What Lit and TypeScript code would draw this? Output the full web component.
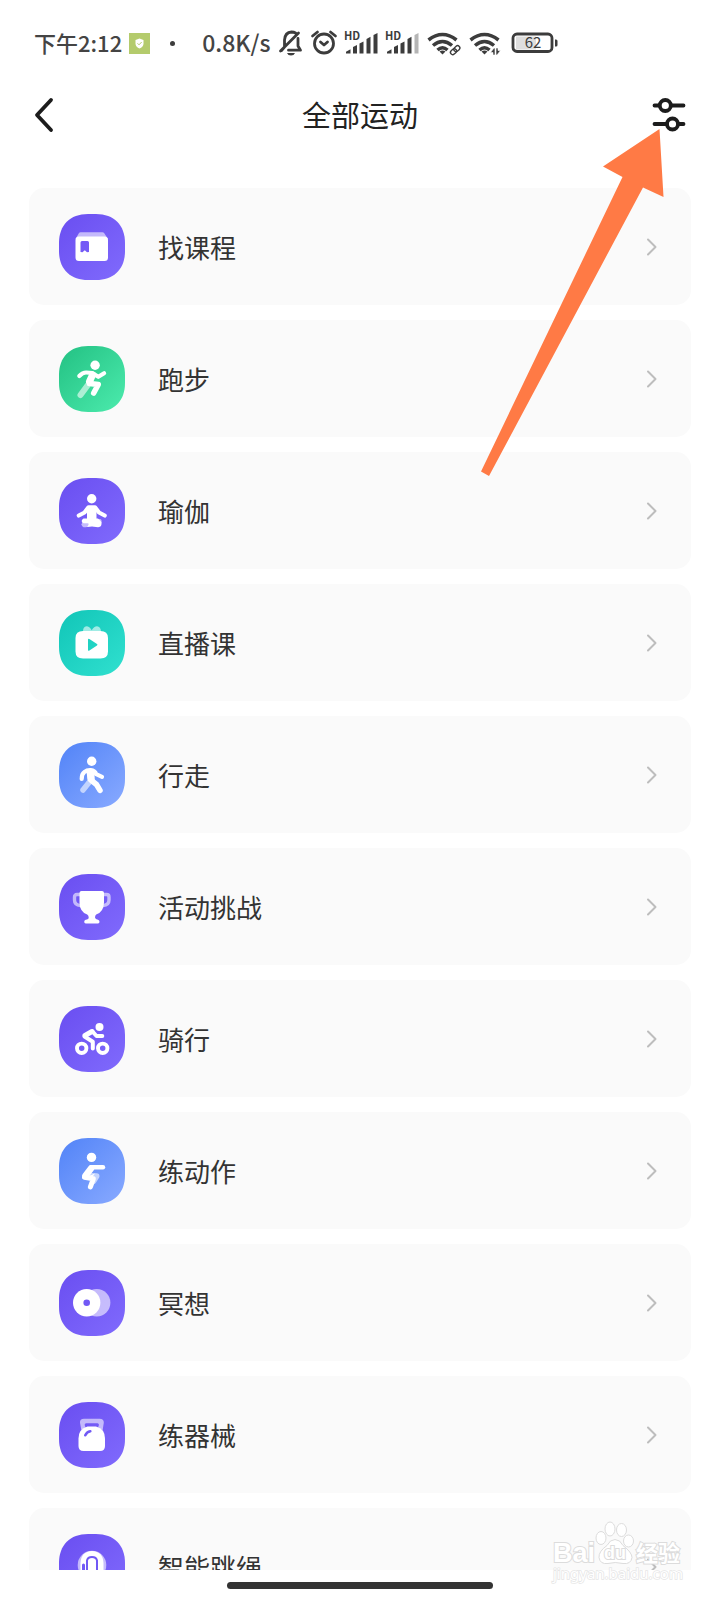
import { LitElement, html, svg, css, type SVGTemplateResult } from "lit";
import { customElement } from "lit/decorators.js";

type Tone = "purple" | "green" | "teal" | "blue";

interface Sport {
  name: string;
  tone: Tone;
  glyph: SVGTemplateResult;
}

const TONES: Record<Tone, [string, string]> = {
  purple: ["#6c51f2", "#7f69fc"],
  green: ["#27c587", "#4ae9ab"],
  teal: ["#14c8ba", "#2fdfce"],
  blue: ["#5787f8", "#86a8ff"],
};

const SPORTS: Sport[] = [
  {
    name: "找课程",
    tone: "purple",
    glyph: svg`
      <path class="faded" d="M21.5 18.3h22q1 0 1.600.8L49 25H16.500l3.500-5.900q.5-.8 1.500-.8Z"/>
      <path class="solid" fill-rule="evenodd" d="M20 22.500h25.500q3.500 0 3.500 3.500V43.500q0 3.500-3.500 3.500H20q-3.500 0-3.500-3.500V26q0-3.500 3.500-3.500ZM23 27q-1.500 0-1.500 1.500V38l2 .3 2.300-2 2.200 2 2-.3V28.500Q30 27 28.500 27Z"/>`,
  },
  {
    name: "跑步",
    tone: "green",
    glyph: svg`
      <path class="line faded" stroke-width="6" d="M28.500 39.500 21.500 49"/>
      <circle class="solid" cx="36.100" cy="19.200" r="4.700"/>
      <path class="line" stroke-width="4.200" d="M20.300 30q3.500-3.700 7-3.500l6 .5 6 3.800 5.800-3.500"/>
      <path class="line" stroke-width="7" d="M33.500 29 30.500 35.500"/>
      <path class="line" stroke-width="5.500" d="M30.500 37.500 39.300 38.500 34.700 47"/>`,
  },
  {
    name: "瑜伽",
    tone: "purple",
    glyph: svg`
      <circle class="solid" cx="32.700" cy="20.700" r="4.700"/>
      <path class="line" stroke-width="4.200" d="M19.800 37.500 25.500 34.500 29.500 29.300H36L40 34.500 45.700 37.500"/>
      <path class="solid" d="M28 29H37.500V42H28Z"/>
      <path class="faded" d="M24.500 41h16.500q1.500 0 1.500 1.500v2L27 49.200h-2.500q-2-.8-2-3Z"/>
      <path class="solid" d="M24.500 40.500H39l3.500 3.500q.7 5.300-3.500 5.200L33 48.500l-5 .5q3-3.500.5-3.700l-4 0q-3.700-2 0-4.800Z"/>`,
  },
  {
    name: "直播课",
    tone: "teal",
    glyph: svg`
      <path class="faded" d="M24 21.500q0-5 3.500-5.200 3 0 5.200 4 2.300-4 5.300-4 3.700.2 4 5.200Z"/>
      <path class="solid" fill-rule="evenodd" d="M24 21h17.500q7.500 0 7.500 7v13.500q0 7-7.500 7H24q-7.500 0-7.500-7V28q0-7 7.500-7Zm5 8.700v10.300q.2 1.300 1.400.6l7.600-5.100q1-.8 0-1.500l-7.600-5q-1.200-.6-1.400.7Z"/>`,
  },
  {
    name: "行走",
    tone: "blue",
    glyph: svg`
      <path class="line faded" stroke-width="5.500" d="M30 40.500 24 48"/>
      <circle class="solid" cx="32.700" cy="19.200" r="4.700"/>
      <path class="line" stroke-width="4.200" d="M22.700 37q0-5 2.500-6.800 3-2.300 6.500-2 4.300.5 5.500 4l5.800 2.600"/>
      <path class="line" stroke-width="7.500" d="M31.500 31 32 36.500"/>
      <path class="line" stroke-width="5.500" d="M32.500 38.500 37.500 42.500 41 48.300"/>`,
  },
  {
    name: "活动挑战",
    tone: "purple",
    glyph: svg`
      <path class="line faded" stroke-width="3.400" d="M21 20.500h-3q-2.500 0-2.500 2.500V26q0 5 6 5.500M44.500 20.500h3q2.500 0 2.500 2.500V26q0 5-6 5.500"/>
      <path class="solid" d="M22.500 17h20.500q2 0 2 2v9.500q-.3 9.500-7.800 12-1.200 1-1.200 3 .3 2 3 2.300 1.500.4 1.500 2t-1.500 1.700H26.700q-1.500-.2-1.500-1.700t1.500-2q3-.3 3-2.300t-1.500-3q-7.500-2.500-7.700-12V19q0-2 2-2Z"/>`,
  },
  {
    name: "骑行",
    tone: "purple",
    glyph: svg`
      <circle class="line" cx="22.700" cy="42.300" r="4.700" stroke-width="3.900"/>
      <circle class="line" cx="43.700" cy="42.300" r="4.700" stroke-width="3.900"/>
      <circle class="solid" cx="40.500" cy="20.900" r="4"/>
      <path class="line" stroke-width="5" d="M26 29.500 33 25.500"/>
      <path class="line" stroke-width="4" d="M33.500 25.500 37.500 30h5.800M25.500 30.500l8.300 5.300V42.500"/>`,
  },
  {
    name: "练动作",
    tone: "blue",
    glyph: svg`
      <path class="line faded" stroke-width="6" d="M33 38 37.500 38.200 34.500 43"/>
      <circle class="solid" cx="32.500" cy="19.400" r="4.700"/>
      <path class="line" stroke-width="4.400" d="M32.500 29.200H44"/>
      <path class="line" stroke-width="6.500" d="M32 30.500 26.500 37.800"/>
      <path class="line" stroke-width="5" d="M25.500 39.200 34.300 40.800 31.400 48.800"/>
      <path class="solid" d="m30 38 6-2.500-3 4Z"/>`,
  },
  {
    name: "冥想",
    tone: "purple",
    glyph: svg`
      <circle class="faded" cx="37.700" cy="32.800" r="13.700"/>
      <circle class="solid" cx="27.700" cy="32.800" r="13.700"/>
      <circle class="hole" cx="27.700" cy="32.800" r="3.300"/>`,
  },
  {
    name: "练器械",
    tone: "purple",
    glyph: svg`
      <path class="faded" fill-rule="evenodd" d="M25 16.700h15.500q4.500 0 4.300 4L43.500 29H22.500l-1.500-8.300q-.3-4 4-4Zm2 4.500q-1.800.6-1.200 2.200l.8 2.100h12.400l.8-2.100q.6-1.600-1.200-2.200Z"/>
      <path class="solid" d="M28.500 24.500h8.500q9 2.500 9 12v7.500q0 5-5 5H24.500q-5 0-5-5v-7.500q0-9.500 9-12Z"/>
      <path class="cut" stroke-width="2.600" d="M26.300 33.200q1.500-3.200 5-3.900"/>`,
  },
  {
    name: "智能跳绳",
    tone: "purple",
    glyph: svg`
      <circle class="faded" cx="33" cy="31" r="14.300"/>
      <path class="solid" d="M21.500 48V29q.5-11.500 11.500-12 11 .5 11.500 12v19Z"/>
      <path class="cut" stroke-width="2" d="M28 48V26.500q.7-3.500 5-3.500t5 3.500V48"/>
      <path class="cut" stroke-width="3" d="M24.500 48V31"/>`,
  },
];

@customElement("sport-row")
export class SportRow extends LitElement {
  static properties = { sport: { attribute: false } };
  declare sport: Sport;

  static styles = css`
    :host { display: block; }
    .card {
      display: flex;
      align-items: center;
      height: 117px;
      padding: 0 33px 0 30px;
      border-radius: 15px;
      background: #fafafa;
      color: #333;
      text-decoration: none;
    }
    .icon { flex: none; width: 66px; height: 66px; }
    .name { flex: 1; margin-left: 33px; font-size: 26px; line-height: 36px; }
    .chevron { flex: none; width: 12px; height: 20px; }
    .solid { fill: #fff; }
    .faded { fill: #fff; opacity: 0.58; }
    .line { fill: none; stroke: #fff; stroke-linecap: round; stroke-linejoin: round; }
    .cut { fill: none; stroke: #7159f5; stroke-linecap: round; }
    .hole { fill: #7159f5; }
  `;

  render() {
    const [from, to] = TONES[this.sport.tone];
    return html`<a class="card" href="#">
      <svg class="icon" viewBox="0 0 66 66" aria-hidden="true">
        <defs>
          <linearGradient id="tone" x1="0" y1="0" x2="1" y2="1">
            <stop offset="0.1" stop-color=${from}></stop>
            <stop offset="0.95" stop-color=${to}></stop>
          </linearGradient>
        </defs>
        <path d="M29 0H37C55 0 66 11 66 29V37C66 55 55 66 37 66H29C11 66 0 55 0 37V29C0 11 11 0 29 0Z" fill="url(#tone)"></path>
        ${this.sport.glyph}
      </svg>
      <span class="name">${this.sport.name}</span>
      <svg class="chevron" viewBox="0 0 12 20" aria-hidden="true">
        <path d="M2 2.500 9.500 10 2 17.500" fill="none" stroke="#bdbdbd" stroke-width="2" stroke-linecap="round" stroke-linejoin="round"></path>
      </svg>
    </a>`;
  }
}

@customElement("status-bar")
export class StatusBar extends LitElement {
  static styles = css`
    :host {
      display: flex;
      align-items: center;
      height: 86px;
      padding: 0 34px;
      box-sizing: border-box;
      color: #444;
      font-size: 22px;
      line-height: 30px;
      font-weight: 500;
      white-space: nowrap;
    }
    .time { padding-bottom: 2px; }
    .badge { width: 21px; height: 21px; margin: 0 20px 0 7px; }
    .dot { width: 5px; height: 5px; border-radius: 50%; background: #3c3c3c; }
    .speed { margin: 0 8px 0 27px; padding-bottom: 2px; font-size: 23px; }
    .icons { display: flex; align-items: center; gap: 8px; }
    .icons svg { display: block; height: 26px; overflow: visible; }
    .stroke { fill: none; stroke: #3c3c3c; stroke-width: 2.800; stroke-linecap: round; stroke-linejoin: round; }
    .arcs { fill: none; stroke: #3c3c3c; stroke-width: 3.500; }
    .thin { fill: none; stroke: #3c3c3c; stroke-width: 1.400; }
    .ink { fill: #3c3c3c; }
    .dim { fill: #b5b5b5; }
    .hd { font-size: 11px; font-weight: 700; fill: #3c3c3c; }
    .level { font-size: 15px; font-weight: 400; fill: #3c3c3c; text-anchor: middle; }
  `;

  private signal(full: boolean) {
    return html`<svg width="33" viewBox="0 0 33 26">
      <text class="hd" x="-1" y="10">HD</text>
      <path class="ink" d="M1 23.500v-1.800l4.500-2.500v4.300ZM8 23.500v-6.500l4-2v8.500ZM14.500 23.500V13.500l4-2v12ZM21.500 23.500V9l4-2.200v16.700Z"></path>
      <path class=${full ? "ink" : "dim"} d="M28.500 23.500V5L32.500 3v20.500Z"></path>
    </svg>`;
  }

  private wifi(extra: SVGTemplateResult) {
    return html`<svg width="34" viewBox="0 0 34 26">
      <path class="arcs" d="M1.500 10Q15.500-1 29.500 10M6 15.500q9.500-8 19 0M10.500 20q5-4.500 10 0"></path>
      <path class="ink" d="M12.500 21.500q3-2 6 0L15.500 24.500Z"></path>
      ${extra}
    </svg>`;
  }

  render() {
    return html`
      <span class="time">下午2:12</span>
      <svg class="badge" viewBox="0 0 21 21" aria-hidden="true">
        <path fill="#b4cb6c" d="M0 0h21v21H0Z"></path>
        <path fill="#fff" d="m10.500 5.500 4 1.500v4q-.5 3-4 4.500-3.500-1.500-4-4.500V7Z"></path>
        <path fill="none" stroke="#b4cb6c" d="m8.500 10.300 1.500 1.500 2.700-2.800"></path>
      </svg>
      <span class="dot"></span>
      <span class="speed">0.8K/s</span>
      <div class="icons">
        <svg width="24" viewBox="0 0 24 26">
          <path class="stroke" d="M5.500 15V10q.5-7.500 7-8 2.500 0 4 1M19 8.500V16l2.500 4.200H9.500M1.500 21 19.500 3M5.500 12v5l-3 3.500"></path>
          <path class="ink" d="M8 23h8q-1 2.500-4 2.500t-4-2.500Z"></path>
        </svg>
        <svg width="26" viewBox="0 0 26 26">
          <circle class="stroke" cx="13" cy="13.500" r="9.500"></circle>
          <path class="stroke" d="m9.500 12 3.500 3 3.500-3M1.500 6 6.500 2M24.500 6 19.500 2"></path>
        </svg>
        ${this.signal(true)}
        ${this.signal(false)}
        ${this.wifi(svg`<path d="M20 25 33 13V26Z" fill="#fff"/><g transform="rotate(-42 28 20)"><rect class="thin" x="22.500" y="18" width="6.500" height="4.500" rx="2.200"/><rect class="thin" x="27" y="18" width="6.500" height="4.500" rx="2.200"/></g>`)}
        ${this.wifi(svg`<path class="ink" stroke="#fff" stroke-width=".6" d="M26 18v7h-2v-2.500h-2.500l3.500-4.500ZM27 25v-7H29v2.500h2.500l-3.500 4.500Z"/>`)}
        <svg width="48" viewBox="0 0 48 26">
          <rect x="5" y="6.500" width="20" height="13" fill="#dedede"></rect>
          <rect class="stroke" x="2" y="4" width="39" height="17.500" rx="4"></rect>
          <path class="ink" d="M44 9.500h1q1.500 0 1.500 1.500v4q0 1.500-1.500 1.500H44Z"></path>
          <text class="level" x="22" y="18">62</text>
        </svg>
      </div>
    `;
  }
}

@customElement("app-root")
export class AppRoot extends LitElement {
  static styles = css`
    :host {
      position: relative;
      display: flex;
      flex-direction: column;
      height: 100vh;
      overflow: hidden;
      background: #fff;
      font-family: "Noto Sans CJK SC", "Noto Sans", sans-serif;
    }
    .header {
      display: grid;
      grid-template-columns: 60px 1fr 60px;
      align-items: center;
      height: 58px;
      padding: 0 29px;
      margin-bottom: 44px;
    }
    .title {
      margin: 0;
      padding-bottom: 2px;
      color: #222;
      font-size: 29px;
      line-height: 40px;
      font-weight: 400;
      text-align: center;
    }
    .tool {
      display: flex;
      padding: 0;
      border: 0;
      background: none;
    }
    .filter { justify-content: flex-end; padding-right: 5px; }
    .outline { fill: none; stroke: #1c1c1c; stroke-width: 3.800; stroke-linecap: round; stroke-linejoin: round; }
    .list {
      flex: 1;
      min-height: 0;
      display: flex;
      flex-direction: column;
      gap: 15px;
      margin: 0;
      padding: 0 29px;
      overflow: auto;
      scrollbar-width: none;
      list-style: none;
    }
    .item { flex: none; }
    .gesture {
      display: flex;
      justify-content: center;
      align-items: center;
      height: 30px;
    }
    .handle { width: 37%; height: 7px; border-radius: 4px; background: #333; }
    .pointer { position: absolute; top: 128px; right: 56px; width: 184px; height: 350px; pointer-events: none; }
    .watermark { position: absolute; right: 36px; bottom: 14px; width: 134px; height: 66px; pointer-events: none; }
    .mark { fill: #fff; stroke: #dcdcdc; stroke-width: 1; }
    .brand { font-family: "Liberation Sans", "Noto Sans CJK SC", sans-serif; font-size: 27px; font-weight: 700; paint-order: stroke; stroke-width: 2; }
    .du { font-size: 18px; }
    .han { font-family: "Noto Sans CJK SC", sans-serif; font-size: 22px; }
    .site { fill: #fff; stroke: #e6e6e6; stroke-width: 1.500; paint-order: stroke; font-family: "Noto Sans", sans-serif; font-size: 15px; }
  `;

  render() {
    return html`
      <status-bar></status-bar>
      <header class="header">
        <button class="tool" aria-label="返回">
          <svg width="30" height="36" viewBox="0 0 30 36">
            <path class="outline" d="M22 3 8 18 22 33"></path>
          </svg>
        </button>
        <h1 class="title">全部运动</h1>
        <button class="tool filter" aria-label="筛选">
          <svg width="34" height="36" viewBox="0 0 34 36">
            <path class="outline" d="M2.500 8.500H7M19 8.500h12.500M2.500 27H15M27 27h4.500"></path>
            <circle class="outline" cx="13.300" cy="8.500" r="5.500"></circle>
            <circle class="outline" cx="20.500" cy="27" r="5.500"></circle>
          </svg>
        </button>
      </header>
      <ul class="list">
        ${SPORTS.map((s) => html`<li class="item"><sport-row .sport=${s}></sport-row></li>`)}
      </ul>
      <div class="gesture"><div class="handle"></div></div>
      <svg class="pointer" viewBox="0 0 184 350" aria-hidden="true">
        <path fill="#ff7a45" d="M179.500 1 123 38.500 142.500 49 1 343.500 9 348 163 59.500 183.500 69Z"></path>
      </svg>
      <svg class="watermark" viewBox="0 0 134 66" aria-hidden="true">
        <text class="mark brand" x="3" y="42">Bai</text>
        <ellipse class="mark" cx="51" cy="18" rx="5" ry="6.500"></ellipse>
        <ellipse class="mark" cx="60" cy="9" rx="5" ry="7"></ellipse>
        <ellipse class="mark" cx="71.500" cy="10" rx="5" ry="6.500"></ellipse>
        <ellipse class="mark" cx="78.500" cy="21" rx="5" ry="6"></ellipse>
        <path class="mark" d="M65 19.500q5 0 8 6 9 7 9 12-1 7-9 6-8-2-15 0-8 1-9-6-.5-6 8-12 3-6 8-6Z"></path>
        <text class="mark brand du" x="54" y="39">du</text>
        <text class="mark brand han" x="86" y="41">经验</text>
        <text class="site" x="3" y="59">jingyan.baidu.com</text>
      </svg>
    `;
  }
}
